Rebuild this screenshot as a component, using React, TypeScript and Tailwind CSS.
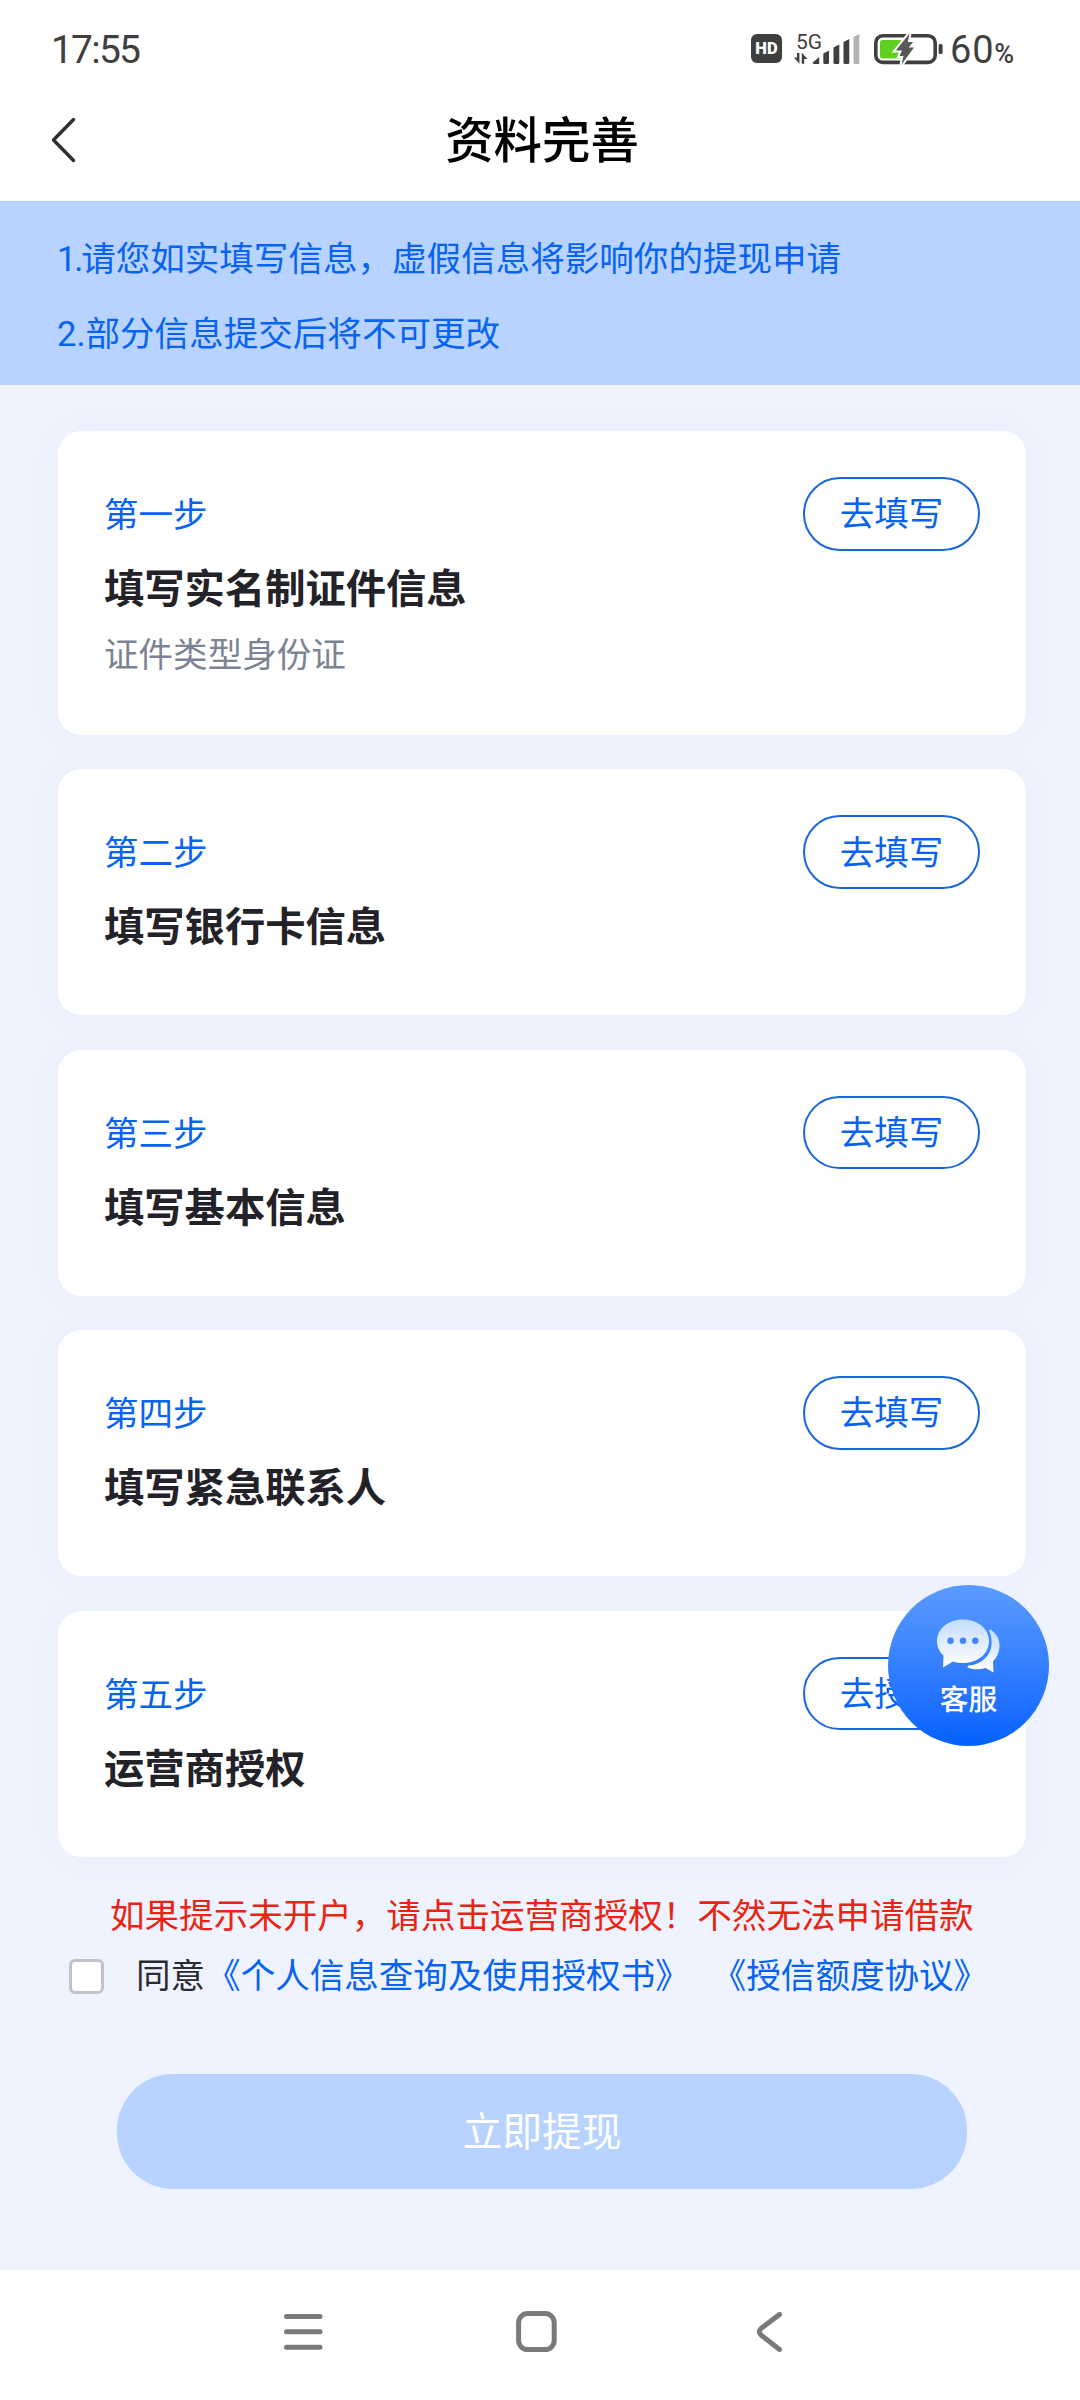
import React from "react";

const steps = [
  {
    step: "第一步",
    title: "填写实名制证件信息",
    desc: "证件类型身份证",
    action: "去填写",
  },
  { step: "第二步", title: "填写银行卡信息", action: "去填写" },
  { step: "第三步", title: "填写基本信息", action: "去填写" },
  { step: "第四步", title: "填写紧急联系人", action: "去填写" },
  { step: "第五步", title: "运营商授权", action: "去授权" },
];

const SignalIcon = () => (
  <svg width="66" height="32" viewBox="0 0 66 32" fill="#3f3f3f">
    <path d="M3 21 H5.4 V31.8 L0 25.5 H3 Z M7.8 31.8 V20.8 L13.5 27 H10.2 V31.8 Z" />
    <path d="M18.7 30.5 L25.2 25 V32 H20.2 Q18.7 32 18.7 30.5 Z" />
    <path d="M29.3 21.5 L35 18.5 V30.5 Q35 32 33.5 32 H30.8 Q29.3 32 29.3 30.5 Z" />
    <path d="M39.5 15.5 L45.3 12.5 V30.5 Q45.3 32 43.8 32 H41 Q39.5 32 39.5 30.5 Z" />
    <path d="M49.5 10 L55.3 7 V30.5 Q55.3 32 53.8 32 H51 Q49.5 32 49.5 30.5 Z" />
    <path
      d="M59.5 5 L65.3 2 V30.5 Q65.3 32 63.8 32 H61 Q59.5 32 59.5 30.5 Z"
      fill="#b3b3b3"
    />
  </svg>
);

const BatteryIcon = () => (
  <svg width="70" height="32" viewBox="0 0 70 32" fill="none">
    <rect x="1.8" y="2.8" width="59.4" height="26.6" rx="7" stroke="#3f3f3f" strokeWidth="3.6" />
    <rect x="6" y="7" width="22" height="18.4" rx="2.5" fill="#5fd01f" />
    <path
      d="M35.5 0.5 L21.8 17.5 H28 L25.5 23 H29.5 L27.5 31.5 L40 14.5 H34.8 L39 9 H33.8 Z"
      fill="#595959"
      stroke="#fff"
      strokeWidth="4"
      paintOrder="stroke"
    />
    <rect x="64.6" y="11" width="4" height="10" rx="1.6" fill="#3f3f3f" />
  </svg>
);

const ChatIcon = () => (
  <svg width="64" height="54" viewBox="0 0 64 54">
    <defs>
      <linearGradient id="bubble" x1="0" y1="0" x2="0" y2="1">
        <stop offset="0" stopColor="#c3dcff" />
        <stop offset="1" stopColor="#fff" />
      </linearGradient>
    </defs>
    <path
      d="M54.5 10.5 C61 15 64 21 63.5 28 C63 34 60.5 39 57 42.5 L57.5 53.5 L49.5 49 C43 51 36 50.5 31.5 48.5 L32 46.5 C45 46 57 36 55.5 21 C55.2 17 54 13.5 53 11.5 Z"
      fill="url(#bubble)"
    />
    <path
      d="M27 0.5 C42 0.5 53 10 53 22 C53 34.5 42 44 27 44 C23.5 44 20 43.5 17 42.5 L7 48.5 L7.5 36.5 C3 32.5 1 27.5 1 22 C1 10 12 0.5 27 0.5 Z"
      fill="url(#bubble)"
    />
    <circle cx="14.5" cy="21.8" r="3.2" fill="#4285f5" />
    <circle cx="27" cy="21.8" r="3.2" fill="#4285f5" />
    <circle cx="39.3" cy="21.8" r="3.2" fill="#4285f5" />
  </svg>
);

const StatusBar = () => (
  <div className="flex h-[80px] items-start justify-between pl-[51px] pr-[64px] pt-[28px] font-[Roboto,sans-serif] text-[#3f3f3f]">
    <div className="text-[39px] leading-[45px] tracking-[-1.8px]">17:55</div>
    <div className="flex items-start">
      <div className="mt-[6px] flex h-[29px] w-[31px] items-center justify-center rounded-[6px] bg-[#3f3f3f] text-[16.5px] font-black text-white">
        HD
      </div>
      <div className="relative ml-[12px] mt-[4px]">
        <SignalIcon />
        <span className="absolute left-[2px] top-[-2px] text-[21px] leading-[24px]">5G</span>
      </div>
      <div className="ml-[14px] mt-[5px]">
        <BatteryIcon />
      </div>
      <div className="ml-[6px] flex w-[66px] items-baseline leading-[45px]">
        <span className="text-[38px] tracking-[0.8px]">60</span>
        <span className="text-[27px] font-medium">%</span>
      </div>
    </div>
  </div>
);

const App = () => {
  return (
    <div className="relative flex h-[2400px] w-[1080px] flex-col overflow-hidden bg-[#eff3ff] font-['Noto_Sans_CJK_SC',sans-serif] text-[34.56px] leading-[50px]">
      {/* Header */}
      <header className="h-[201px] shrink-0 bg-white">
        <StatusBar />
        <div className="flex h-[120px] items-center pl-[51px] pr-[46px]">
          <svg width="26" height="46" viewBox="0 0 26 46" fill="none">
            <path d="M22.5 2.5 L2.5 23 L22.5 43.5" stroke="#2e2e2e" strokeWidth="3.4" strokeLinecap="round" strokeLinejoin="round" />
          </svg>
          <h1 className="-mt-[6px] flex-1 pr-[27px] text-center text-[48.4px] font-medium text-black">
            资料完善
          </h1>
        </div>
      </header>

      {/* Notice */}
      <div className="h-[184px] shrink-0 bg-[#b8d3ff] pl-[57px] pt-[21px] font-[Roboto,'Noto_Sans_CJK_SC',sans-serif] leading-[75px] text-[#0763f2]">
        <p>
          <span className="tracking-[-2.2px]">1.</span>请您如实填写信息，虚假信息将影响你的提现申请
        </p>
        <p>2.部分信息提交后将不可更改</p>
      </div>

      {/* Steps */}
      <main className="flex flex-col gap-[34.4px] pl-[58px] pr-[54px] pt-[46px]">
        {steps.map((item) => (
          <section
            key={item.step}
            className="flex items-start justify-between rounded-[23px] bg-white pb-[66px] pl-[46px] pr-[46px] pt-[46px] shadow-[0_0_44px_rgba(60,60,140,0.025)]"
          >
            <div>
              <p className="mt-[10px] text-[#0763f2]">{item.step}</p>
              <h2 className="mt-[24px] text-[40.3px] font-bold text-[#222228]">{item.title}</h2>
              {item.desc && <p className="mt-[16px] h-[42px] text-[#7c8494]">{item.desc}</p>}
            </div>
            <button className="h-[73.5px] w-[177px] rounded-[37px] border-2 border-[#1a66dc] pb-[5px] text-[#0763f2]">
              {item.action}
            </button>
          </section>
        ))}
      </main>

      <p className="mt-[31px] pl-[110px] text-[#ea2412]">
        如果提示未开户，请点击运营商授权！不然无法申请借款
      </p>

      {/* Agreements */}
      <div className="mt-[10px] flex items-center whitespace-nowrap pl-[69px]">
        <div className="mr-[32px] mt-[8px] h-[35px] w-[35px] rounded-[6px] border-[3px] border-[#c3c3c5] bg-white" />
        <span className="text-[#2b2b30]">同意</span>
        <span className="ml-px text-[#0763f2]">《个人信息查询及使用授权书》</span>
        <span className="ml-[22px] text-[#0763f2]">《授信额度协议》</span>
      </div>

      <button className="ml-[117px] mt-[76px] h-[115px] w-[850px] shrink-0 rounded-[56px] bg-[#b8d3ff] pb-[4px] text-[39.8px] text-white">
        立即提现
      </button>

      {/* Customer service */}
      <div className="absolute left-[888px] top-[1585px] flex h-[161px] w-[161px] flex-col items-center rounded-full bg-linear-to-b from-[#5b9bff] to-[#0060ff] pt-[34px]">
        <div className="-ml-[2px]">
          <ChatIcon />
        </div>
        <span className="mt-[5px] text-[28.8px] font-medium leading-[40px] text-white">客服</span>
      </div>

      {/* System navigation */}
      <nav className="mt-auto flex h-[130px] shrink-0 items-start bg-white pl-[284px] pt-[40px]">
        <svg width="39" height="44" viewBox="0 0 39 44" stroke="#7a7a7a" strokeWidth="5" strokeLinecap="round">
          <path d="M2.5 6.5 H36 M2.5 21.8 H36 M2.5 37.2 H36" />
        </svg>
        <svg className="ml-[193px]" width="42" height="44" viewBox="0 0 42 44" fill="none">
          <rect x="2.6" y="3.6" width="35.6" height="36" rx="9" stroke="#7a7a7a" strokeWidth="5" />
        </svg>
        <svg className="ml-[198px]" width="28" height="44" viewBox="0 0 28 44" fill="none">
          <path d="M23.5 4.5 L5 18.5 Q1.5 21.8 5 25 L23.5 39.5" stroke="#7a7a7a" strokeWidth="5" strokeLinecap="round" />
        </svg>
      </nav>
    </div>
  );
};

export default App;
